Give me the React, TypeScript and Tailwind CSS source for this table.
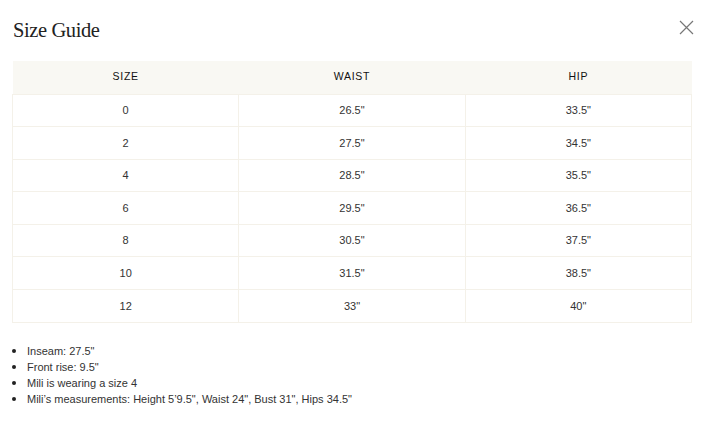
import React from 'react';

const rows = [
    ['0', '26.5"', '33.5"'],
    ['2', '27.5"', '34.5"'],
    ['4', '28.5"', '35.5"'],
    ['6', '29.5"', '36.5"'],
    ['8', '30.5"', '37.5"'],
    ['10', '31.5"', '38.5"'],
    ['12', '33"', '40"'],
];

const notes = [
    'Inseam: 27.5"',
    'Front rise: 9.5"',
    'Mili is wearing a size 4',
    'Mili\u2019s measurements: Height 5\u20199.5", Waist 24", Bust 31", Hips 34.5"',
];

const App: React.FC = () => (
    <div className="w-[705px] h-[422px] bg-white px-3 pt-[17px] text-[#222]" style={{ fontFamily: '"Liberation Sans", Arial, sans-serif' }}>
        <div className="flex items-start justify-between h-[44px]">
            <h2 className="text-[20.5px] leading-[26px] tracking-[-0.4px] pl-px" style={{ fontFamily: '"Liberation Serif", "Times New Roman", serif' }}>Size Guide</h2>
            <button className="mt-[3px] mr-[-1px] text-[#777]">
                <svg width="15" height="15" viewBox="0 0 15 15" fill="none" stroke="currentColor" strokeWidth="1.2">
                    <path d="M1 1L14 14M14 1L1 14" />
                </svg>
            </button>
        </div>
        <table className="w-[680px] table-fixed border-collapse text-[11px] text-[#333]">
            <thead>
                <tr className="bg-[#f9f8f3] h-[33px]">
                    <th className="font-normal tracking-[0.7px] text-[10.5px] text-[#111]">SIZE</th>
                    <th className="font-normal tracking-[0.7px] text-[10.5px] text-[#111]">WAIST</th>
                    <th className="font-normal tracking-[0.7px] text-[10.5px] text-[#111]">HIP</th>
                </tr>
            </thead>
            <tbody>
                {rows.map((r) => (
                    <tr key={r[0]} className="h-[32.6px]">
                        {r.map((c, i) => (
                            <td key={i} className="border border-[#f4f1e9] text-center p-0">{c}</td>
                        ))}
                    </tr>
                ))}
            </tbody>
        </table>
        <ul className="mt-[20px] pl-[15px] text-[11px] leading-[16px] text-[#333] list-disc list-outside">
            {notes.map((n) => (
                <li key={n} className="marker:text-[#222] marker:text-[13px]">{n}</li>
            ))}
        </ul>
    </div>
);

export default App;
